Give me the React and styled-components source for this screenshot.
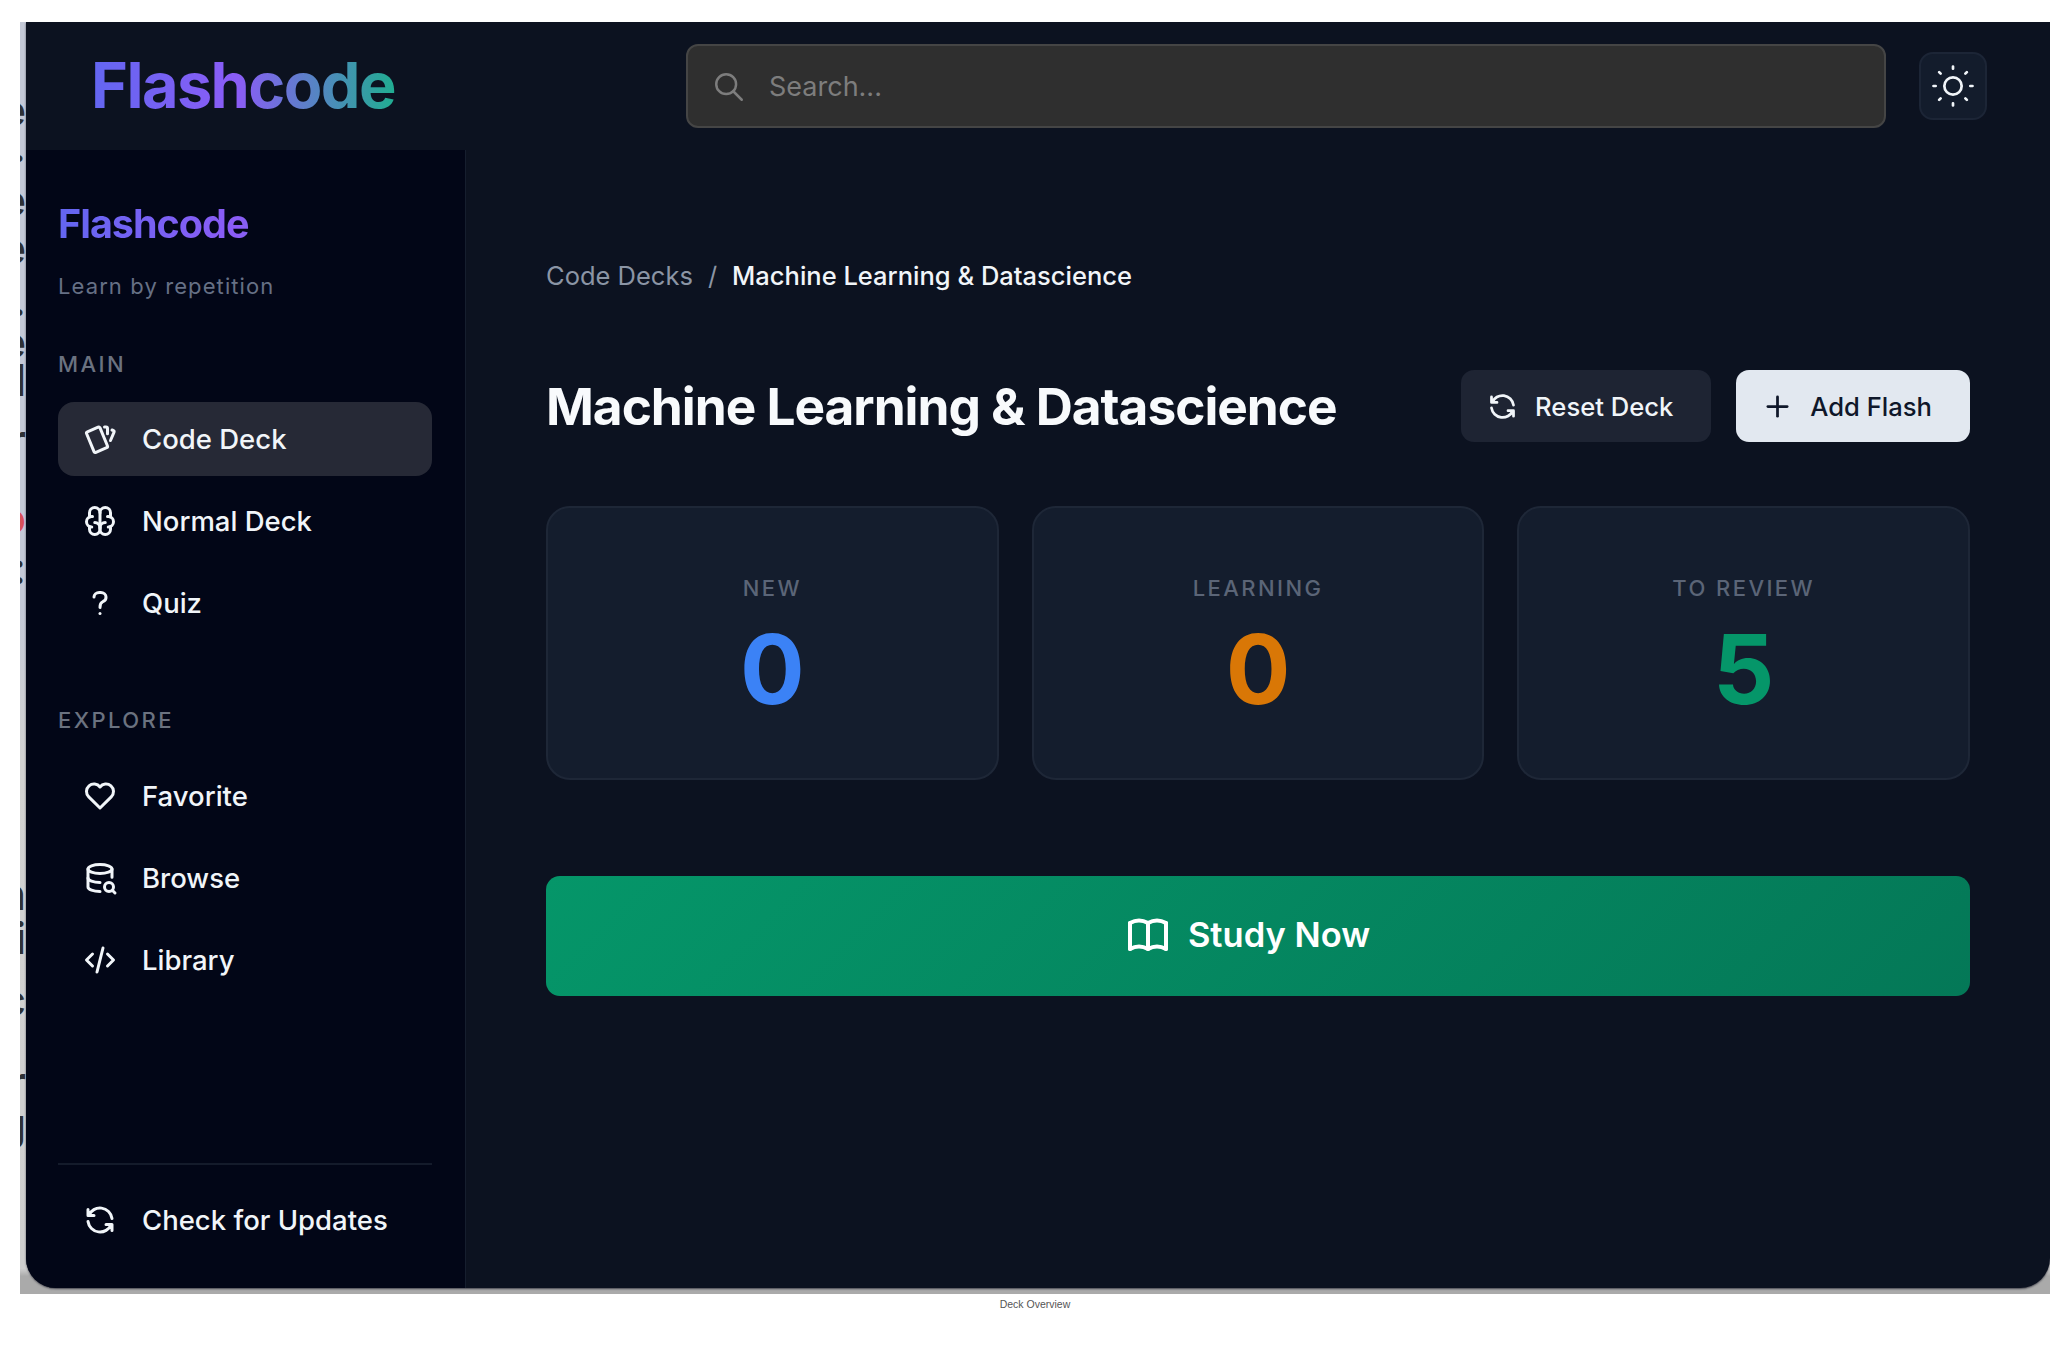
import React from 'react';
import styled, { createGlobalStyle } from 'styled-components';
import {
  TbBook,
  TbBrain,
  TbCards,
  TbCode,
  TbDatabaseSearch,
  TbHeart,
  TbPlus,
  TbQuestionMark,
  TbRefresh,
  TbSearch,
  TbSun,
} from 'react-icons/tb';

const GlobalStyle = createGlobalStyle`
  html, body {
    margin: 0;
    padding: 0;
    background: #fff;
    font-family: Inter, "Liberation Sans", sans-serif;
  }
  * {
    box-sizing: border-box;
  }
`;

const Page = styled.div`
  width: 2070px;
  height: 1354px;
  padding: 22px 20px 0 20px;
  overflow: hidden;
`;
const Backdrop = styled.div`
  position: relative;
  height: 1272px;
  padding: 0 0 6px 6px;
  overflow: hidden;
  background: linear-gradient(to bottom, #c4c9d7 0%, #c4c9d7 46%, #d2d2d2 58%, #cfcfcf 98%, #aaaaaa 98.6%);
`;
const Glyph = styled.span`
  position: absolute;
  right: calc(100% - 6px);
  top: ${p => p.$top}px;
  font-size: 44px;
  font-weight: 600;
  line-height: 30px;
  color: ${p => p.$color || '#2f3136'};
`;
const Window = styled.div`
  position: relative;
  display: flex;
  flex-direction: column;
  height: 1266px;
  overflow: hidden;
  background: #0c1220;
  border-radius: 0 0 30px 30px;
  box-shadow: 0 1px 2px rgba(60, 60, 70, 0.9);
`;
const Caption = styled.div`
  margin-top: 3px;
  text-align: center;
  font-family: "Liberation Sans", sans-serif;
  font-size: 10.5px;
  line-height: 14px;
  color: #555;
`;

const Header = styled.header`
  display: flex;
  align-items: center;
  flex: 0 0 128px;
  padding-right: 63px;
`;
const LogoSlot = styled.div`
  flex: 0 0 660px;
  padding-left: 65px;
`;
const Logo = styled.span`
  display: inline-block;
  font-size: ${p => p.$size}px;
  font-weight: 700;
  line-height: 1.2;
  letter-spacing: -0.025em;
  background: linear-gradient(90deg, #6366f1 0%, #8b5cf6 48%, #10b981 108%);
  -webkit-background-clip: text;
  background-clip: text;
  color: transparent;
`;
const SearchBox = styled.div`
  flex: 1;
  display: flex;
  align-items: center;
  gap: 23px;
  height: 84px;
  padding: 1px 0 0 24px;
  background: #2f2f2f;
  border: 2px solid #454545;
  border-radius: 12px;
  color: #7d7d7d;
  font-size: 27px;
`;
const ThemeButton = styled.button`
  display: flex;
  align-items: center;
  justify-content: center;
  width: 68px;
  height: 68px;
  margin-left: 33px;
  padding: 0;
  background: #131c2c;
  border: 2px solid #1c2536;
  border-radius: 14px;
  color: #f1f5f9;
`;

const Body = styled.div`
  flex: 1;
  display: flex;
  min-height: 0;
`;
const Sidebar = styled.aside`
  flex: 0 0 440px;
  display: flex;
  flex-direction: column;
  padding: 51px 33px 0 32px;
  background: #020617;
  border-right: 1px solid #161e2e;
`;
const Tagline = styled.div`
  margin-top: 24px;
  font-size: 22px;
  line-height: 28px;
  letter-spacing: 0.05em;
  color: #667085;
`;
const SectionLabel = styled.div`
  margin-top: ${p => p.$top}px;
  margin-bottom: ${p => p.$after}px;
  font-size: 22px;
  font-weight: 500;
  line-height: 26px;
  letter-spacing: 0.11em;
  color: #6b7280;
`;
const NavList = styled.nav`
  display: flex;
  flex-direction: column;
  gap: 8px;
`;
const NavItem = styled.a`
  display: flex;
  align-items: center;
  gap: 24px;
  height: 74px;
  padding-left: 24px;
  border-radius: 16px;
  background: ${p => (p.$active ? '#262936' : 'transparent')};
  color: #f1f5f9;
  font-size: 27.5px;
  font-weight: 500;
`;
const SidebarFooter = styled.div`
  margin-top: auto;
  margin-bottom: 31px;
  padding-top: 18px;
  border-top: 2px solid #141b2b;
`;

const Main = styled.main`
  flex: 1;
  padding: 108px 80px 0 80px;
`;
const Breadcrumbs = styled.div`
  display: flex;
  align-items: center;
  gap: 15px;
  height: 34px;
  margin-bottom: 78px;
  font-size: 25.5px;
  color: #8b95a5;
`;
const Current = styled.span`
  color: #f1f5f9;
  font-weight: 500;
`;
const TitleRow = styled.div`
  display: flex;
  align-items: center;
  justify-content: space-between;
  height: 72px;
  margin-bottom: 64px;
`;
const Title = styled.h1`
  margin: 0;
  font-size: 51.4px;
  font-weight: 700;
  letter-spacing: -0.02em;
  color: #f8fafc;
`;
const Actions = styled.div`
  display: flex;
  gap: 25px;
`;
const ActionButton = styled.button`
  display: flex;
  align-items: center;
  gap: 16px;
  height: 72px;
  padding: 0 38px 0 25px;
  border: 0;
  border-radius: 13px;
  background: ${p => (p.$light ? '#e2e8f0' : '#1e2433')};
  color: ${p => (p.$light ? '#0f172a' : '#f1f5f9')};
  font-family: inherit;
  font-size: 25.6px;
  font-weight: 500;
`;
const Stats = styled.div`
  display: grid;
  grid-template-columns: repeat(3, 1fr);
  gap: 33px;
  margin-bottom: 96px;
`;
const StatCard = styled.div`
  display: flex;
  flex-direction: column;
  align-items: center;
  height: 274px;
  padding-top: 66px;
  background: #141d2d;
  border: 2px solid #1e2737;
  border-radius: 24px;
`;
const StatLabel = styled.div`
  font-size: 22px;
  font-weight: 500;
  line-height: 28px;
  letter-spacing: 0.11em;
  color: #5b6577;
`;
const StatValue = styled.div`
  margin-top: 19px;
  font-size: 96px;
  font-weight: 700;
  line-height: 96px;
  color: ${p => p.$color};
`;
const StudyButton = styled.button`
  display: flex;
  align-items: center;
  justify-content: center;
  gap: 16px;
  width: 100%;
  height: 120px;
  padding: 0 22px 3px 0;
  border: 0;
  border-radius: 14px;
  background: linear-gradient(135deg, #059669, #047857);
  color: #fff;
  font-family: inherit;
  font-size: 34.5px;
  font-weight: 600;
`;

const fragments = [
  { top: 73, ch: 'e' },
  { top: 109, ch: '.' },
  { top: 163, ch: 'e' },
  { top: 211, ch: 'e' },
  { top: 263, ch: '.' },
  { top: 305, ch: 'e' },
  { top: 343, ch: 'l' },
  { top: 403, ch: 'r' },
  { top: 481, ch: 'o', color: '#d8505a' },
  { top: 531, ch: ':' },
  { top: 857, ch: 'n' },
  { top: 901, ch: 'i' },
  { top: 963, ch: 'c' },
  { top: 1045, ch: 'r' },
  { top: 1087, ch: 'g' },
];

const mainLinks = [
  { label: 'Code Deck', Icon: TbCards, active: true },
  { label: 'Normal Deck', Icon: TbBrain },
  { label: 'Quiz', Icon: TbQuestionMark },
];
const exploreLinks = [
  { label: 'Favorite', Icon: TbHeart },
  { label: 'Browse', Icon: TbDatabaseSearch },
  { label: 'Library', Icon: TbCode },
];
const stats = [
  { label: 'NEW', value: 0, color: '#3b82f6' },
  { label: 'LEARNING', value: 0, color: '#d97706' },
  { label: 'TO REVIEW', value: 5, color: '#059669' },
];

function SideLinks({ links }) {
  return (
    <NavList>
      {links.map(({ label, Icon, active }) => (
        <NavItem key={label} $active={active}>
          <Icon size={36} strokeWidth={2} />
          {label}
        </NavItem>
      ))}
    </NavList>
  );
}

export default function App() {
  return (
    <Page>
      <GlobalStyle />
      <Backdrop>
        {fragments.map(f => (
          <Glyph key={f.top} $top={f.top} $color={f.color}>
            {f.ch}
          </Glyph>
        ))}
        <Window>
          <Header>
            <LogoSlot>
              <Logo $size={63}>Flashcode</Logo>
            </LogoSlot>
            <SearchBox>
              <TbSearch size={34} strokeWidth={1.75} />
              Search...
            </SearchBox>
            <ThemeButton>
              <TbSun size={52} strokeWidth={1.25} />
            </ThemeButton>
          </Header>
          <Body>
            <Sidebar>
              <Logo $size={39.5}>Flashcode</Logo>
              <Tagline>Learn by repetition</Tagline>
              <SectionLabel $top={51} $after={25}>MAIN</SectionLabel>
              <SideLinks links={mainLinks} />
              <SectionLabel $top={67} $after={26}>EXPLORE</SectionLabel>
              <SideLinks links={exploreLinks} />
              <SidebarFooter>
                <SideLinks links={[{ label: 'Check for Updates', Icon: TbRefresh }]} />
              </SidebarFooter>
            </Sidebar>
            <Main>
              <Breadcrumbs>
                <span>Code Decks</span>
                <span>/</span>
                <Current>Machine Learning &amp; Datascience</Current>
              </Breadcrumbs>
              <TitleRow>
                <Title>Machine Learning &amp; Datascience</Title>
                <Actions>
                  <ActionButton>
                    <TbRefresh size={33} />
                    Reset Deck
                  </ActionButton>
                  <ActionButton $light>
                    <TbPlus size={33} />
                    Add Flash
                  </ActionButton>
                </Actions>
              </TitleRow>
              <Stats>
                {stats.map(s => (
                  <StatCard key={s.label}>
                    <StatLabel>{s.label}</StatLabel>
                    <StatValue $color={s.color}>{s.value}</StatValue>
                  </StatCard>
                ))}
              </Stats>
              <StudyButton>
                <TbBook size={48} />
                Study Now
              </StudyButton>
            </Main>
          </Body>
        </Window>
      </Backdrop>
      <Caption>Deck Overview</Caption>
    </Page>
  );
}
